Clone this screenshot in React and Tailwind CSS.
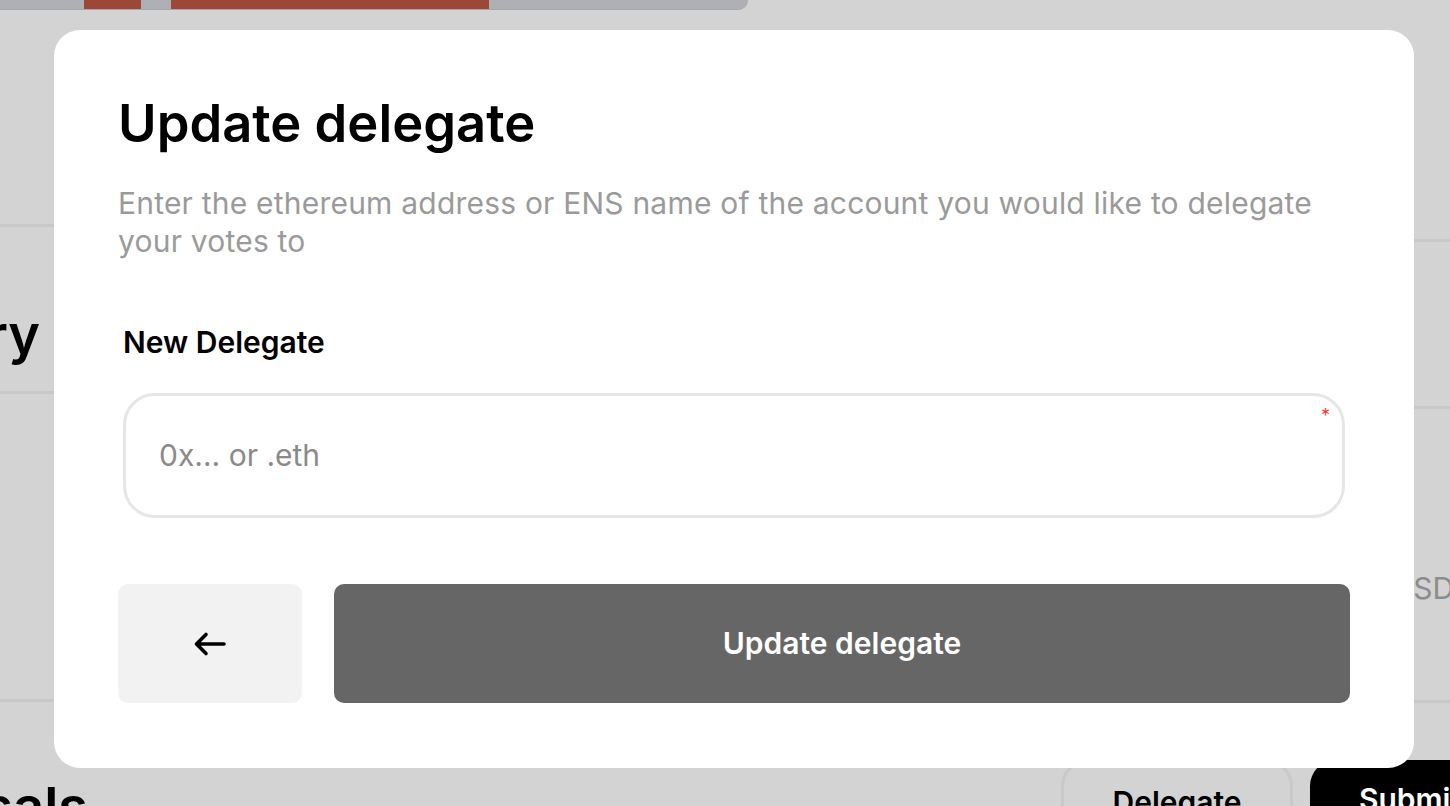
import React from "react";

function BackArrow() {
  return (
    <svg width="34" height="26" viewBox="0 0 34 26" fill="none">
      <path d="M31 13H3.5M13 3.5L3.5 13L13 22.5" stroke="#000" strokeWidth="3.6" strokeLinecap="round" strokeLinejoin="round" />
    </svg>
  );
}

export default function App() {
  return (
    <div
      className="relative w-[1450px] h-[806px] overflow-hidden bg-[#d3d3d3]"
      style={{ fontFamily: "Inter, 'Noto Sans', sans-serif" }}
    >
      {/* background page */}
      <div className="flex flex-col">
        <div className="flex h-[10px] w-[748px] bg-[#aeb0b5] rounded-br-[16px] border-b border-[#a5a7ac]">
          <div className="ml-[84px] w-[57px] bg-[#9b4837]" />
          <div className="ml-[30px] w-[318px] bg-[#9b4837]" />
        </div>
        <div className="flex justify-between h-[750px]">
          {/* left column */}
          <div className="flex flex-col w-[700px]">
            <div className="h-[214px]" />
            <div className="h-[3px] bg-[#c8c8c8]" />
            <div className="h-[164px] flex items-center pt-[52px]">
              <div className="w-[40px] flex justify-end">
                <span className="whitespace-nowrap text-[54px] font-semibold text-black leading-none">Treasury</span>
              </div>
            </div>
            <div className="h-[3px] bg-[#c8c8c8]" />
            <div className="h-[305px]" />
            <div className="h-[3px] bg-[#c8c8c8]" />
          </div>
          {/* right column */}
          <div className="flex flex-col w-[200px]">
            <div className="h-[229px]" />
            <div className="h-[3px] bg-[#c8c8c8]" />
            <div className="h-[164px]" />
            <div className="h-[3px] bg-[#c8c8c8]" />
            <div className="h-[194px] flex items-end pl-[141px]">
              <span className="text-[30px] text-[#8c8c8c] leading-none">USD</span>
            </div>
            <div className="h-[97px]" />
            <div className="h-[3px] bg-[#c8c8c8]" />
          </div>
        </div>
        <div className="flex justify-between items-start h-[80px]">
          <div className="w-[88px] flex justify-end pt-[20px]">
            <span className="whitespace-nowrap text-[54px] font-semibold text-black leading-none">Proposals</span>
          </div>
          <div className="flex gap-[17px] -mr-[60px]">
            <div className="w-[232px] h-[70px] rounded-[26px] border-[3px] border-[#c9c9c9] flex justify-center pt-[24px]">
              <span className="text-[30px] font-semibold text-black leading-none">Delegate</span>
            </div>
            <div className="w-[200px] h-[70px] rounded-[26px] bg-black flex justify-center pt-[24px]">
              <span className="text-[30px] font-semibold text-white leading-none">Submit</span>
            </div>
          </div>
        </div>
      </div>

      {/* modal overlay */}
      <div className="absolute inset-0 pt-[30px] pl-[54px]">
        <div className="w-[1360px] h-[738px] bg-white rounded-[26px] px-[64px] pt-[63px] flex flex-col">
          <h1 className="text-[52.5px] leading-[60px] font-semibold text-black">Update delegate</h1>
          <p className="mt-[31px] text-[30px] leading-[38px] text-[#9a9a9a] tracking-[0.007em]">
            Enter the ethereum address or ENS name of the account you would like to delegate your votes to
          </p>
          <div className="mx-[5px] mt-[65px] flex flex-col">
            <label className="text-[30px] leading-[34px] font-semibold text-black">New Delegate</label>
            <div className="relative mt-[34px] h-[125px] rounded-[32px] border-[3px] border-[#e6e6e6] flex items-center px-[33px]">
              <span className="text-[30px] text-[#8a8a8a]">0x... or .eth</span>
              <span className="absolute right-[12px] top-[11px] text-[18px] text-[#e8453c] leading-none">*</span>
            </div>
          </div>
          <div className="mt-[66px] flex gap-[32px]">
            <button className="w-[184px] h-[119px] rounded-[10px] bg-[#f2f2f2] flex items-center justify-center">
              <BackArrow />
            </button>
            <button className="flex-1 h-[119px] rounded-[10px] bg-[#666666] flex items-center justify-center">
              <span className="text-[30px] font-semibold text-white">Update delegate</span>
            </button>
          </div>
        </div>
      </div>
    </div>
  );
}
